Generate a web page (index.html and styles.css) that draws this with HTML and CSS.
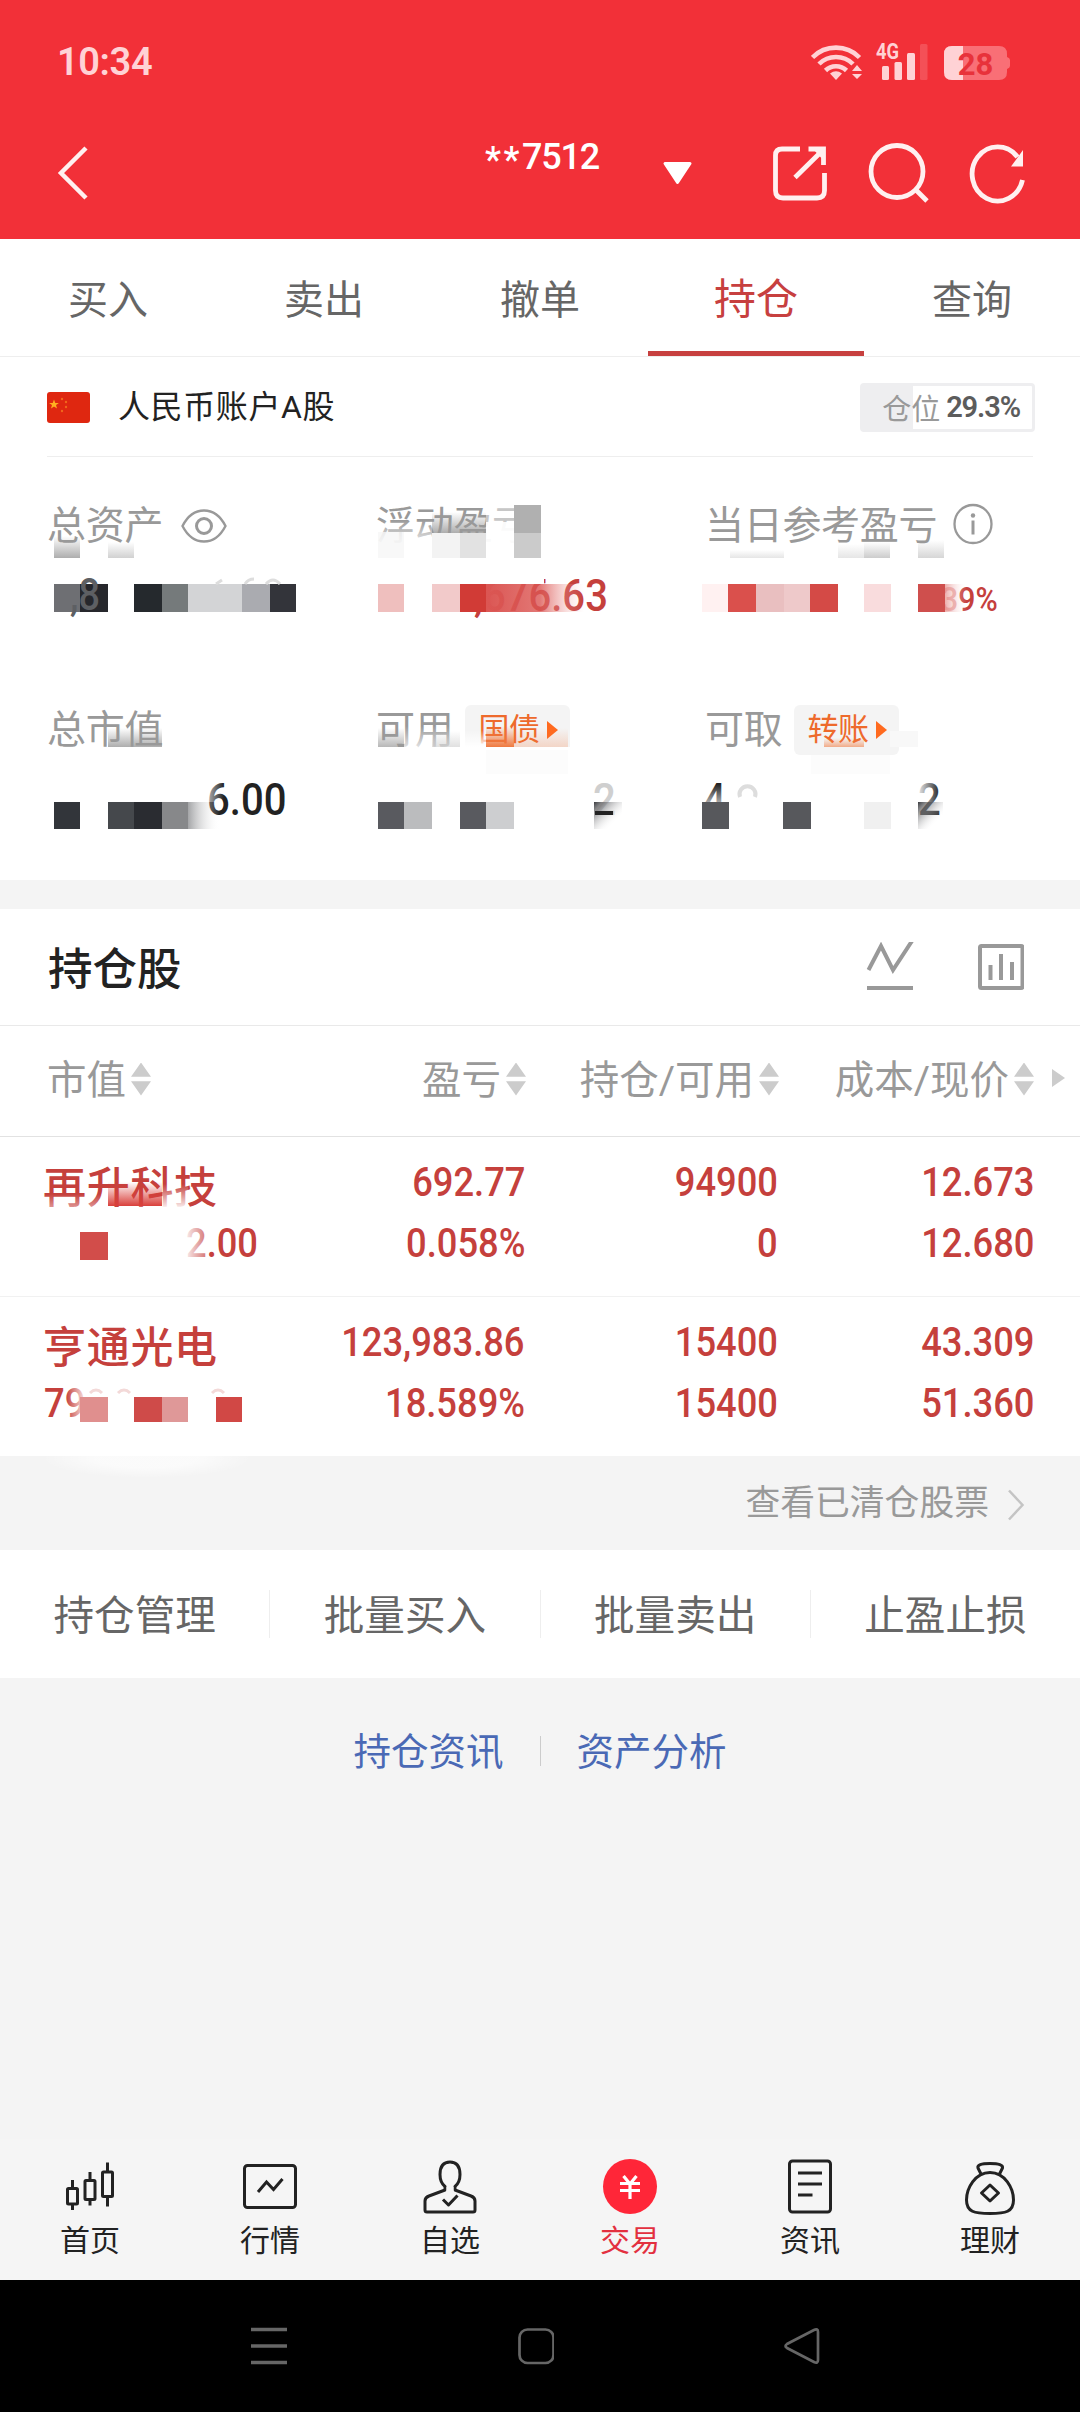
FILE: index.html
```
<!DOCTYPE html>
<html lang="zh-CN">
<head>
  <meta charset="UTF-8">
  <title>持仓</title>
  <link rel="stylesheet" href="styles.css">
</head>
<body>
  <header class="header">
    <div class="statusbar">
      <span class="clock">10:34</span>
      <svg class="status-icons" width="200" height="44" viewBox="811 40 200 44">
        <g fill="none" stroke="#ffd2d5" stroke-width="4.6">
          <path d="M812.500 57.500a33 33 0 0 1 47 0"/>
          <path d="M819 64a24 24 0 0 1 34 0"/>
          <path d="M825.500 70.500a15 15 0 0 1 21 0"/>
        </g>
        <path d="M836 80l-6-6.500q6-4.500 12 0z" fill="#ffd2d5"/>
        <path d="M857 65l5 6h-10zM857 79l5-5h-10z" fill="#ffd2d5"/>
        <text class="net" x="876" y="59" textLength="23" lengthAdjust="spacingAndGlyphs">4G</text>
        <g fill="#ffd2d5">
          <rect x="882" y="66" width="7" height="14" rx="1.500"/>
          <rect x="894.500" y="62" width="7.500" height="18" rx="1.500"/>
          <rect x="907" y="53" width="8" height="27" rx="1.500"/>
          <rect x="920" y="44" width="7.500" height="36" rx="1.500" opacity=".2"/>
        </g>
        <path d="M952 46h47q8 0 8 8v3q3 1 3 3v6q0 2-3 3v3q0 8-8 8h-47q-8 0-8-8v-18q0-8 8-8z" fill="#f96f76"/>
        <path d="M963 46h-11q-8 0-8 8v18q0 8 8 8h11z" fill="#ffd2d5"/>
        <text class="battery" x="975.500" y="75" text-anchor="middle">28</text>
      </svg>
    </div>
    <div class="titlebar">
      <svg width="32" height="60" viewBox="57 143 32 60">
        <path d="M86 148L61 173l25 25" fill="none" stroke="#fff0f0" stroke-width="4.500"/>
      </svg>
      <span class="account-no"><i>**</i>7512</span>
      <svg class="drop" width="30" height="24" viewBox="662 160 30 24">
        <path d="M665 162.500h25l-12.500 19z" fill="#fff" stroke="#fff" stroke-width="3" stroke-linejoin="round"/>
      </svg>
      <svg class="actions" width="258" height="64" viewBox="771 141 258 64" fill="none" stroke="#fff0f0" stroke-width="4.800">
        <path d="M800 149h-18q-6.500 0-6.500 6.500v35q0 7.500 7.500 7.500h34q7.500 0 7.500-7.500v-17.500M808.500 149h15v16M824 149l-29 28.500"/>
        <path d="M825 148v14l-12-13z" fill="#fff0f0" stroke="none"/>
        <circle cx="897" cy="171.500" r="26"/>
        <path d="M916 190l11 11"/>
        <path d="M1022.500 180a25.500 27 0 1 1-5-23"/>
        <path d="M1023 150v16.500h-12z" fill="#fff0f0" stroke="none"/>
      </svg>
    </div>
  </header>

  <nav class="tabs">
    <a>买入</a>
    <a>卖出</a>
    <a>撤单</a>
    <a class="active">持仓</a>
    <a>查询</a>
  </nav>

  <section class="account">
    <svg width="43" height="31" viewBox="0 0 43 31">
      <rect width="43" height="31" rx="3" fill="#df2710"/>
      <path d="M7 7.500l1.300 3.400h3.600l-2.900 2.200 1 3.500-3-2-3 2 1-3.500-2.900-2.200h3.600z" fill="#ffb020"/>
      <g fill="#f0661c"><circle cx="15" cy="7" r="1.200"/><circle cx="19" cy="10" r="1.200"/><circle cx="19" cy="15" r="1.200"/><circle cx="15" cy="19" r="1.200"/></g>
    </svg>
    <span class="account-name">人民币账户A股</span>
    <span class="position"><span class="position-label">仓位</span><b>29.3%</b></span>
  </section>

  <section class="stats">
    <div class="stat">
      <div class="label">总资产
        <svg class="eye" width="46" height="34" viewBox="0 0 46 34" fill="none" stroke="#999" stroke-width="2.400">
          <path d="M1.500 17q8-15.500 21.500-15.500t21.500 15.500q-8 15.500-21.500 15.500t-21.500-15.500z"/>
          <circle cx="23" cy="17" r="7.500" stroke-width="3"/>
        </svg>
      </div>
      <div class="value"></div>
    </div>
    <div class="stat">
      <div class="label">浮动盈亏</div>
      <div class="value red"><span class="num pl">,676.63</span></div>
    </div>
    <div class="stat">
      <div class="label">当日参考盈亏
        <svg class="info" width="40" height="42" viewBox="0 0 40 42">
          <ellipse cx="20" cy="21" rx="18.500" ry="19" fill="none" stroke="#999" stroke-width="2.300"/>
          <circle cx="20" cy="12.500" r="2.200" fill="#999"/>
          <path d="M20 17.500v14" stroke="#999" stroke-width="3"/>
        </svg>
      </div>
      <div class="value red"><span class="num rate"><i>3</i>9%</span></div>
    </div>
    <div class="stat">
      <div class="label">总市值</div>
      <div class="value"><span class="num mv">6.00</span></div>
    </div>
    <div class="stat">
      <div class="label">可用 <span class="tag">国债<svg width="11" height="18" viewBox="0 0 11 18"><path d="M0 0l11 9-11 9z" fill="#ff6a1f"/></svg></span></div>
      <div class="value"><span class="num avail">2</span></div>
    </div>
    <div class="stat">
      <div class="label">可取 <span class="tag">转账<svg width="11" height="18" viewBox="0 0 11 18"><path d="M0 0l11 9-11 9z" fill="#ff6a1f"/></svg></span></div>
      <div class="value"><span class="num four">4</span><span class="num two">2</span></div>
    </div>

    <!-- mosaic over the private amounts -->
    <svg class="mosaic" width="1080" height="423" viewBox="0 457 1080 423">
      <defs>
        <linearGradient id="down" x2="0" y2="1"><stop offset="0" stop-color="#999" stop-opacity="0"/><stop offset="1" stop-color="#999"/></linearGradient>
        <linearGradient id="white" x2="0" y2="1"><stop offset="0" stop-color="#fff" stop-opacity="0"/><stop offset="1" stop-color="#fff"/></linearGradient>
        <linearGradient id="whiteleft"><stop offset="0" stop-color="#fff"/><stop offset="1" stop-color="#fff" stop-opacity="0"/></linearGradient>
        <linearGradient id="orange" x2="0" y2="1"><stop offset="0" stop-color="#f07a40" stop-opacity="0"/><stop offset="1" stop-color="#f07a40"/></linearGradient>
        <linearGradient id="pink"><stop offset="0" stop-color="#db5653"/><stop offset=".55" stop-color="#db5653" stop-opacity=".8"/><stop offset="1" stop-color="#f6c4c2" stop-opacity="0"/></linearGradient>
        <linearGradient id="pinkend"><stop offset="0" stop-color="#e58a88"/><stop offset="1" stop-color="#fff" stop-opacity="0"/></linearGradient>
        <linearGradient id="dark" x2="1" y2="1"><stop offset="0" stop-color="#3a3b3f"/><stop offset=".75" stop-color="#fff" stop-opacity="0"/></linearGradient>
        <linearGradient id="grayend"><stop offset="0" stop-color="#a4a5a7"/><stop offset="1" stop-color="#fff" stop-opacity="0"/></linearGradient>
      </defs>
      <!-- under the first labels -->
      <rect x="54" y="536" width="26" height="22" fill="url(#down)" opacity=".8"/>
      <rect x="108" y="542" width="26" height="16" fill="url(#down)" opacity=".45"/>
      <rect x="376" y="520" width="56" height="30" fill="url(#white)"/>
      <rect x="378" y="532" width="26" height="26" fill="#f6f6f6" opacity=".8"/>
      <rect x="432" y="512" width="54" height="21" fill="url(#down)" opacity=".8"/>
      <rect x="432" y="533" width="28" height="25" fill="#f3f3f3"/>
      <rect x="460" y="533" width="26" height="25" fill="#e2e2e2"/>
      <rect x="486" y="522" width="52" height="36" fill="#fff" opacity=".95"/>
      <rect x="486" y="502" width="52" height="20" fill="#fff" opacity=".45"/>
      <rect x="514" y="505" width="27" height="28" fill="#b0b0b0"/>
      <rect x="514" y="533" width="27" height="25" fill="#cbcbcb"/>
      <rect x="730" y="550" width="54" height="8" fill="url(#down)" opacity=".25"/>
      <rect x="838" y="544" width="26" height="14" fill="url(#down)" opacity=".25"/>
      <rect x="864" y="542" width="26" height="16" fill="url(#down)" opacity=".5"/>
      <rect x="918" y="540" width="26" height="18" fill="url(#down)" opacity=".4"/>
      <!-- first amounts -->
      <rect x="54" y="584" width="26" height="28" fill="#6e6f73"/>
      <rect x="80" y="584" width="28" height="28" fill="#26272c"/>
      <text class="ghost" x="70" y="610" textLength="30" lengthAdjust="spacingAndGlyphs">,8</text>
      <rect x="134" y="584" width="28" height="28" fill="#25292d"/>
      <rect x="162" y="584" width="26" height="28" fill="#757a7b"/>
      <rect x="188" y="584" width="54" height="28" fill="#d3d4d6"/>
      <rect x="242" y="584" width="28" height="28" fill="#aaabb0"/>
      <rect x="270" y="584" width="26" height="28" fill="#33343a"/>
      <path d="M216 584l6-4M245 584q3-5 9-5M266 584q7-8 14 0" fill="none" stroke="#ddd" stroke-width="3"/>
      <rect x="378" y="584" width="26" height="28" fill="#efbfbe"/>
      <rect x="432" y="584" width="28" height="28" fill="#f2caca"/>
      <rect x="460" y="574" width="84" height="10" fill="#fff"/>
      <rect x="460" y="584" width="26" height="28" fill="#d13b36"/>
      <rect x="486" y="584" width="98" height="28" fill="url(#pink)"/>
      <rect x="702" y="584" width="26" height="28" fill="#fff1f1"/>
      <rect x="728" y="584" width="28" height="28" fill="#da504c"/>
      <rect x="756" y="584" width="28" height="28" fill="#e9bfc0"/>
      <rect x="784" y="584" width="26" height="28" fill="#eec9ca"/>
      <rect x="810" y="584" width="28" height="28" fill="#d44a46"/>
      <rect x="864" y="584" width="27" height="28" fill="#f9dcdd"/>
      <rect x="918" y="584" width="27" height="28" fill="#cf4f4d"/>
      <rect x="945" y="584" width="22" height="28" fill="url(#pinkend)" opacity=".7"/>
      <!-- second labels -->
      <rect x="108" y="728" width="54" height="19" fill="url(#down)" opacity=".8"/>
      <rect x="378" y="728" width="26" height="19" fill="url(#down)" opacity=".7"/>
      <rect x="404" y="726" width="60" height="21" fill="url(#white)" opacity=".7"/>
      <rect x="432" y="731" width="28" height="16" fill="url(#down)" opacity=".3"/>
      <rect x="462" y="730" width="24" height="17" fill="url(#white)"/>
      <rect x="462" y="747" width="112" height="10" fill="#fff"/>
      <rect x="486" y="726" width="28" height="21" fill="url(#orange)"/>
      <rect x="514" y="728" width="54" height="19" fill="url(#orange)" opacity=".25"/>
      <rect x="486" y="750" width="82" height="24" fill="#fcfcfc"/>
      <rect x="824" y="738" width="40" height="9" fill="url(#orange)" opacity=".6"/>
      <rect x="811" y="755" width="79" height="19" fill="#fcfcfc"/>
      <rect x="890" y="731" width="28" height="16" fill="#f8f8f8"/>
      <!-- second amounts -->
      <rect x="54" y="802" width="26" height="27" fill="#32353a"/>
      <rect x="108" y="802" width="26" height="27" fill="#45484c"/>
      <rect x="134" y="802" width="28" height="27" fill="#2a2c31"/>
      <rect x="162" y="802" width="26" height="27" fill="#87888a"/>
      <rect x="188" y="802" width="32" height="27" fill="url(#grayend)"/>
      <rect x="204" y="780" width="20" height="22" fill="url(#whiteleft)" opacity=".8"/>
      <rect x="378" y="802" width="26" height="27" fill="#595a5f"/>
      <rect x="404" y="802" width="28" height="27" fill="#bbbcbe"/>
      <rect x="460" y="802" width="26" height="27" fill="#595a5f"/>
      <rect x="486" y="802" width="28" height="27" fill="#cdced0"/>
      <rect x="594" y="802" width="28" height="27" fill="url(#dark)"/>
      <path d="M595 813h18" stroke="#222" stroke-width="4"/>
      <rect x="702" y="784" width="26" height="18" fill="url(#white)" opacity=".6"/>
      <rect x="702" y="802" width="27" height="27" fill="#57585c"/>
      <path d="M740 797a8 8 0 1 1 15 0" fill="none" stroke="#ddd" stroke-width="4"/>
      <rect x="783" y="802" width="28" height="27" fill="#57585c"/>
      <rect x="864" y="802" width="27" height="27" fill="#f0f0f0"/>
      <rect x="916" y="780" width="24" height="22" fill="url(#whiteleft)"/>
      <rect x="918" y="802" width="25" height="27" fill="url(#dark)"/>
    </svg>
  </section>

  <section class="holdings">
    <div class="holdings-title">
      <h2>持仓股</h2>
      <svg width="158" height="50" viewBox="866 942 158 50" fill="none" stroke="#999" stroke-width="4">
        <path d="M868.500 970l12.500-24 12 24 19-29M867 988h46"/>
        <rect x="980" y="946" width="42.500" height="42" rx="1.500"/>
        <path d="M990.500 965v15M1001 954v26M1012 962v18"/>
      </svg>
    </div>
    <div class="row thead">
      <span>市值<i class="sort"></i></span>
      <span>盈亏<i class="sort"></i></span>
      <span>持仓/可用<i class="sort"></i></span>
      <span>成本/现价<i class="sort"></i></span>
      <i class="more"></i>
    </div>
    <div class="rows">
      <div class="row">
        <div><strong>再升科技</strong><span class="num cut">2.00</span></div>
        <div><span class="num">692.77</span><span class="num">0.058%</span></div>
        <div><span class="num">94900</span><span class="num">0</span></div>
        <div><span class="num">12.673</span><span class="num">12.680</span></div>
      </div>
      <div class="row">
        <div><strong>亨通光电</strong><span class="num">79</span></div>
        <div><span class="num">123,983.86</span><span class="num">18.589%</span></div>
        <div><span class="num">15400</span><span class="num">15400</span></div>
        <div><span class="num">43.309</span><span class="num">51.360</span></div>
      </div>
      <svg class="mosaic" width="1080" height="345" viewBox="0 1137 1080 345">
        <defs>
          <linearGradient id="red" x2="0" y2="1"><stop offset="0" stop-color="#d9403b" stop-opacity="0"/><stop offset="1" stop-color="#d9403b"/></linearGradient>
          <linearGradient id="fade"><stop offset="0" stop-color="#fff" stop-opacity="0"/><stop offset="1" stop-color="#fff"/></linearGradient>
          <linearGradient id="unfade"><stop offset="0" stop-color="#fff" stop-opacity=".9"/><stop offset="1" stop-color="#fff" stop-opacity=".3"/></linearGradient>
          <linearGradient id="drop" x2="0" y2="1"><stop offset="0" stop-color="#fff" stop-opacity="0"/><stop offset="1" stop-color="#fff"/></linearGradient>
          <radialGradient id="glow"><stop offset=".5" stop-color="#fff" stop-opacity=".6"/><stop offset="1" stop-color="#fff" stop-opacity="0"/></radialGradient>
        </defs>
        <rect x="45" y="1194" width="63" height="15" fill="url(#drop)" opacity=".5"/>
        <rect x="162" y="1184" width="26" height="26" fill="url(#drop)"/>
        <rect x="108" y="1182" width="54" height="24" fill="url(#red)"/>
        <rect x="80" y="1232" width="28" height="28" fill="#d24d4a"/>
        <rect x="186" y="1228" width="20" height="32" fill="url(#unfade)"/>
        <rect x="66" y="1385" width="22" height="34" fill="url(#fade)"/>
        <rect x="80" y="1397" width="28" height="25" fill="#e08f8e"/>
        <rect x="134" y="1397" width="28" height="25" fill="#cf4b49"/>
        <rect x="162" y="1397" width="26" height="25" fill="#df9898"/>
        <rect x="216" y="1397" width="26" height="25" fill="#d14845"/>
        <path d="M90 1393q6-6 12 0M118 1393q6-6 12 0M212 1393q6-6 12 0" fill="none" stroke="#f3d9d8" stroke-width="3"/>
        <ellipse cx="147" cy="1458" rx="105" ry="20" fill="url(#glow)"/>
      </svg>
    </div>
  </section>

  <div class="cleared">查看已清仓股票
    <svg width="18" height="32" viewBox="0 0 18 32"><path d="M2 1.500l13.500 14.500-13.500 14.500" fill="none" stroke="#c4c4c4" stroke-width="2.500"/></svg>
  </div>

  <div class="batch">
    <a>持仓管理</a>
    <a>批量买入</a>
    <a>批量卖出</a>
    <a>止盈止损</a>
  </div>

  <div class="links"><a>持仓资讯</a><a>资产分析</a></div>

  <nav class="bottom">
    <a>
      <svg width="60" height="60" viewBox="60 2158 60 60" fill="none" stroke="#222" stroke-width="3">
        <rect x="67.500" y="2188.500" width="10" height="15.500" rx="1"/>
        <rect x="85" y="2180.500" width="10" height="19" rx="1"/>
        <rect x="102.500" y="2172" width="10" height="24.500" rx="1"/>
        <path d="M72.500 2180v8M72.500 2204v6M90 2172v8M90 2200v5.500M107.500 2162.500v9M107.500 2197v9.500"/>
      </svg>
      首页
    </a>
    <a>
      <svg width="60" height="60" viewBox="240 2158 60 60" fill="none" stroke="#222" stroke-width="3">
        <rect x="244.500" y="2165.500" width="51" height="42" rx="3"/>
        <path d="M258 2192l8.500-10 7 7.500 9-10.500"/>
      </svg>
      行情
    </a>
    <a>
      <svg width="60" height="60" viewBox="420 2158 60 60" fill="none" stroke="#222" stroke-width="3" stroke-linejoin="round">
        <path d="M445 2190v-3.500q-5-4-5-12 0-12.500 10-12.500t10 12.500q0 8-5 12v3.500l16 6q4 1.500 4 5v9q0 2-2 2h-46q-2 0-2-2v-9q0-3.500 4-5z"/>
        <path d="M443 2199.500l5.500 5.500 9-9.500"/>
        <path d="M446.500 2189h7" stroke="#f5f5f5" stroke-width="4"/>
      </svg>
      自选
    </a>
    <a class="on">
      <svg width="60" height="60" viewBox="600 2158 60 60">
        <ellipse cx="630" cy="2186.500" rx="27" ry="27.500" fill="#ff2638"/>
        <path d="M623.500 2176l6.500 8 6.500-8M620 2183.500h20M620 2190.500h20M630 2184v15" fill="none" stroke="#fff" stroke-width="3.200"/>
      </svg>
      交易
    </a>
    <a>
      <svg width="60" height="60" viewBox="780 2158 60 60" fill="none" stroke="#222" stroke-width="3">
        <rect x="789.500" y="2161" width="41" height="51" rx="3"/>
        <path d="M798 2173h24M798 2184h24M798 2195h14.500"/>
      </svg>
      资讯
    </a>
    <a>
      <svg width="60" height="60" viewBox="960 2158 60 60" fill="none" stroke="#222" stroke-width="3" stroke-linejoin="round">
        <path d="M981 2174l-3-6q-1.500-4.500 12-4.500t12.500 4.500l-3 6"/>
        <path d="M990 2172.500c15 0 23.500 16 23.500 27.500 0 12-8 13.500-23.500 13.500s-23.500-1.500-23.500-13.500c0-11.500 8.500-27.500 23.500-27.500z"/>
        <path d="M990 2185l8.500 8-8.500 8-8.500-8z"/>
      </svg>
      理财
    </a>
  </nav>

  <footer class="sysnav">
    <svg width="36" height="40" viewBox="0 0 36 40"><path d="M0 3.500h36M0 20h36M0 36.500h36" stroke="#666" stroke-width="3.500"/></svg>
    <svg width="38" height="40" viewBox="0 0 38 40"><rect x="3.500" y="3.500" width="34" height="33.500" rx="8" fill="none" stroke="#666" stroke-width="2.700"/></svg>
    <svg width="38" height="40" viewBox="0 0 38 40"><path d="M4 18q-3 2 0 4l27 14q4 2 4-2v-28q0-4-4-2z" fill="none" stroke="#666" stroke-width="2.700"/></svg>
  </footer>
</body>
</html>
```

FILE: styles.css
```
* {
  box-sizing: border-box;
}

body {
  margin: 0;
  width: 1080px;
  height: 2412px;
  display: flex;
  flex-direction: column;
  overflow: hidden;
  background-color: #f4f4f4;
  color: #222;
  font-family: Roboto, "Noto Sans CJK SC", sans-serif;
}

svg {
  display: block;
  flex: none;
}

i {
  font-style: normal;
}

.num {
  display: inline-block;
  font-weight: 500;
  transform: scaleX(0.89);
  transform-origin: left;
}

/* header */
.header {
  height: 239px;
  flex: none;
  background-color: #f23038;
}

.statusbar {
  height: 123px;
  display: flex;
  align-items: center;
  justify-content: space-between;
  padding: 0 69px 0 57px;
}

.clock {
  font-size: 38px;
  font-weight: 600;
  letter-spacing: -0.4px;
  color: #ffd2d5;
}

.net {
  font-size: 22px;
  font-weight: 700;
  fill: #ffd2d5;
}

.battery {
  font-size: 31px;
  font-weight: 700;
  fill: #e8323b;
}

.titlebar {
  height: 100px;
  display: flex;
  align-items: center;
  padding: 0 51px 0 57px;
}

.account-no {
  display: flex;
  margin: -30px 0 0 396px;
  width: 113px;
  font-size: 36px;
  font-weight: 500;
  letter-spacing: -1.2px;
  color: #fff;
}

.account-no i {
  margin-top: 3px;
  letter-spacing: 2.500px;
}

.drop {
  margin-left: 64px;
}

.actions {
  margin-left: auto;
}

/* tabs */
.tabs {
  height: 118px;
  flex: none;
  display: flex;
  background-color: #fff;
  border-bottom: 1px solid #eee;
}

.tabs a {
  flex: 1;
  line-height: 124px;
  text-align: center;
  font-size: 40px;
  color: #666;
}

.tabs .active {
  height: 117px;
  font-size: 42px;
  line-height: 122px;
  color: #c7403f;
  border-bottom: 5px solid #c7403f;
}

/* account */
.account {
  height: 100px;
  flex: none;
  display: flex;
  align-items: center;
  padding: 0 45px 0 47px;
  background: linear-gradient(#eee, #eee) 47px 99px / 986px 1px no-repeat #fff;
}

.account-name {
  margin-left: 28px;
  font-size: 32px;
  letter-spacing: 0.6px;
  line-height: 106px;
}

.position {
  display: flex;
  align-items: center;
  justify-content: flex-end;
  width: 175px;
  height: 49px;
  margin-left: auto;
  padding-right: 12px;
  border: 3px solid #eeeef0;
  border-radius: 4px;
  background: linear-gradient(#eeeef0, #eeeef0) 0 0 / 50px 100% no-repeat;
  color: #999;
  font-size: 29px;
}

.position b {
  margin-left: 6px;
  font-size: 29px;
  font-weight: 600;
  letter-spacing: -1.1px;
  color: #5c5c5c;
}

/* stats */
.stats {
  position: relative;
  height: 423px;
  flex: none;
  display: grid;
  grid-template-columns: 329px 329px 1fr;
  grid-template-rows: 129px 130px;
  row-gap: 75px;
  padding: 39px 0 0 47px;
  background-color: #fff;
}

.label {
  display: flex;
  align-items: center;
  height: 60px;
  font-size: 39px;
  line-height: 62px;
  letter-spacing: -0.3px;
  color: #999;
}

.eye {
  margin: -1px 0 0 18px;
}

.info {
  margin: -4px 0 0 16px;
}

.tag {
  display: flex;
  align-items: center;
  width: 105px;
  height: 50px;
  margin-left: 12px;
  padding-left: 13px;
  border-radius: 6px;
  background-color: #f4f4f4;
  font-size: 31px;
  color: #ee6a2c;
}

.tag svg {
  margin-left: 7px;
}

.value {
  height: 60px;
  margin-top: 10px;
  font-size: 45px;
  line-height: 60px;
  white-space: nowrap;
}

.red {
  color: #c5403c;
}

.pl {
  margin-left: 98px;
}

.rate {
  margin-left: 236px;
  font-size: 34px;
}

.rate i {
  color: #e9a9a7;
}

.mv {
  margin-left: 160px;
}

.avail {
  margin-left: 217px;
  color: #cfcfcf;
}

.four {
  margin-left: -2px;
}

.two {
  margin-left: 189px;
}

.mosaic {
  position: absolute;
  left: 0;
  top: 0;
}

.ghost {
  font-size: 45px;
  fill: #5d5f63;
  font-weight: 500;
}

/* holdings */
.holdings {
  margin-top: 29px;
  flex: none;
  background-color: #fff;
}

.holdings-title {
  display: flex;
  align-items: center;
  justify-content: space-between;
  height: 117px;
  padding: 0 56px 0 48px;
  border-bottom: 1px solid #e9e9e9;
}

.holdings-title h2 {
  margin: -3px 0 0;
  font-size: 44.500px;
  font-weight: 500;
}

.row {
  display: grid;
  grid-template-columns: 226px 255px 253px 256px;
  height: 159px;
  padding: 14px 0 0 44px;
  color: #c5403c;
  font-size: 41.500px;
  line-height: 61px;
}

.row div {
  display: flex;
  flex-direction: column;
  align-items: flex-end;
}

.row .num {
  transform: scaleX(0.875);
  transform-origin: right;
}

.row div:first-child {
  align-items: flex-start;
}

.row div:first-child .num {
  transform-origin: left;
}

.row strong {
  font-size: 43px;
  font-weight: 500;
  letter-spacing: 0.7px;
  height: 61px;
  margin-left: -1px;
  line-height: 75px;
}

.row .cut {
  margin-left: 142px;
}

.rows {
  position: relative;
}

.rows .row + .row {
  height: 160px;
  border-top: 1px solid #f1f1f1;
}

.thead {
  position: relative;
  height: 111px;
  padding-top: 0;
  border-bottom: 1px solid #e2e2e2;
  color: #999;
  font-size: 39.500px;
  line-height: 112px;
}

.thead span {
  display: flex;
  align-items: center;
  justify-content: flex-end;
  height: 110px;
  margin-right: -1px;
}

.thead span:first-child {
  justify-content: flex-start;
  padding-left: 3px;
}

.thead span:nth-child(4) {
  margin-right: 0;
}

.sort {
  margin-left: 5px;
  margin-top: -4px;
  height: 33px;
  width: 20px;
  background-color: #ccc;
  clip-path: polygon(50% 0, 100% 43%, 0 43%, 0 57%, 100% 57%, 50% 100%, 0 57%, 0 43%);
}

.more {
  position: absolute;
  right: 15px;
  top: 43px;
  border-left: 13px solid #ccc;
  border-top: 9.500px solid transparent;
  border-bottom: 9.500px solid transparent;
}

/* below the table */
.cleared {
  display: flex;
  align-items: center;
  justify-content: flex-end;
  height: 94px;
  flex: none;
  padding-right: 55px;
  font-size: 34.800px;
  line-height: 104px;
  color: #999;
}

.cleared svg {
  margin: 4px 0 0 18px;
}

.batch {
  display: flex;
  align-items: center;
  height: 128px;
  flex: none;
  background-color: #fff;
}

.batch a {
  flex: 1;
  height: 48px;
  line-height: 52px;
  text-align: center;
  font-size: 40.600px;
  color: #666;
}

.batch a + a {
  border-left: 1px solid #eee;
}

.links {
  display: flex;
  justify-content: center;
  margin-top: 58px;
  font-size: 37.500px;
  line-height: 33px;
  color: #4a69b5;
}

.links a {
  height: 30px;
  padding: 0 36px;
}

.links a + a {
  border-left: 1px solid #ccc;
}

/* bottom navigation */
.bottom {
  display: flex;
  height: 141px;
  margin-top: auto;
  padding-top: 19px;
  flex: none;
  background-color: #f5f5f5;
}

.bottom a {
  flex: 1;
  display: flex;
  flex-direction: column;
  align-items: center;
  font-size: 30px;
  line-height: 45px;
}

.bottom .on {
  color: #e3303f;
}

.sysnav {
  display: flex;
  justify-content: space-between;
  align-items: center;
  height: 132px;
  flex: none;
  padding: 0 259px 0 251px;
  background-color: #000;
}
```
